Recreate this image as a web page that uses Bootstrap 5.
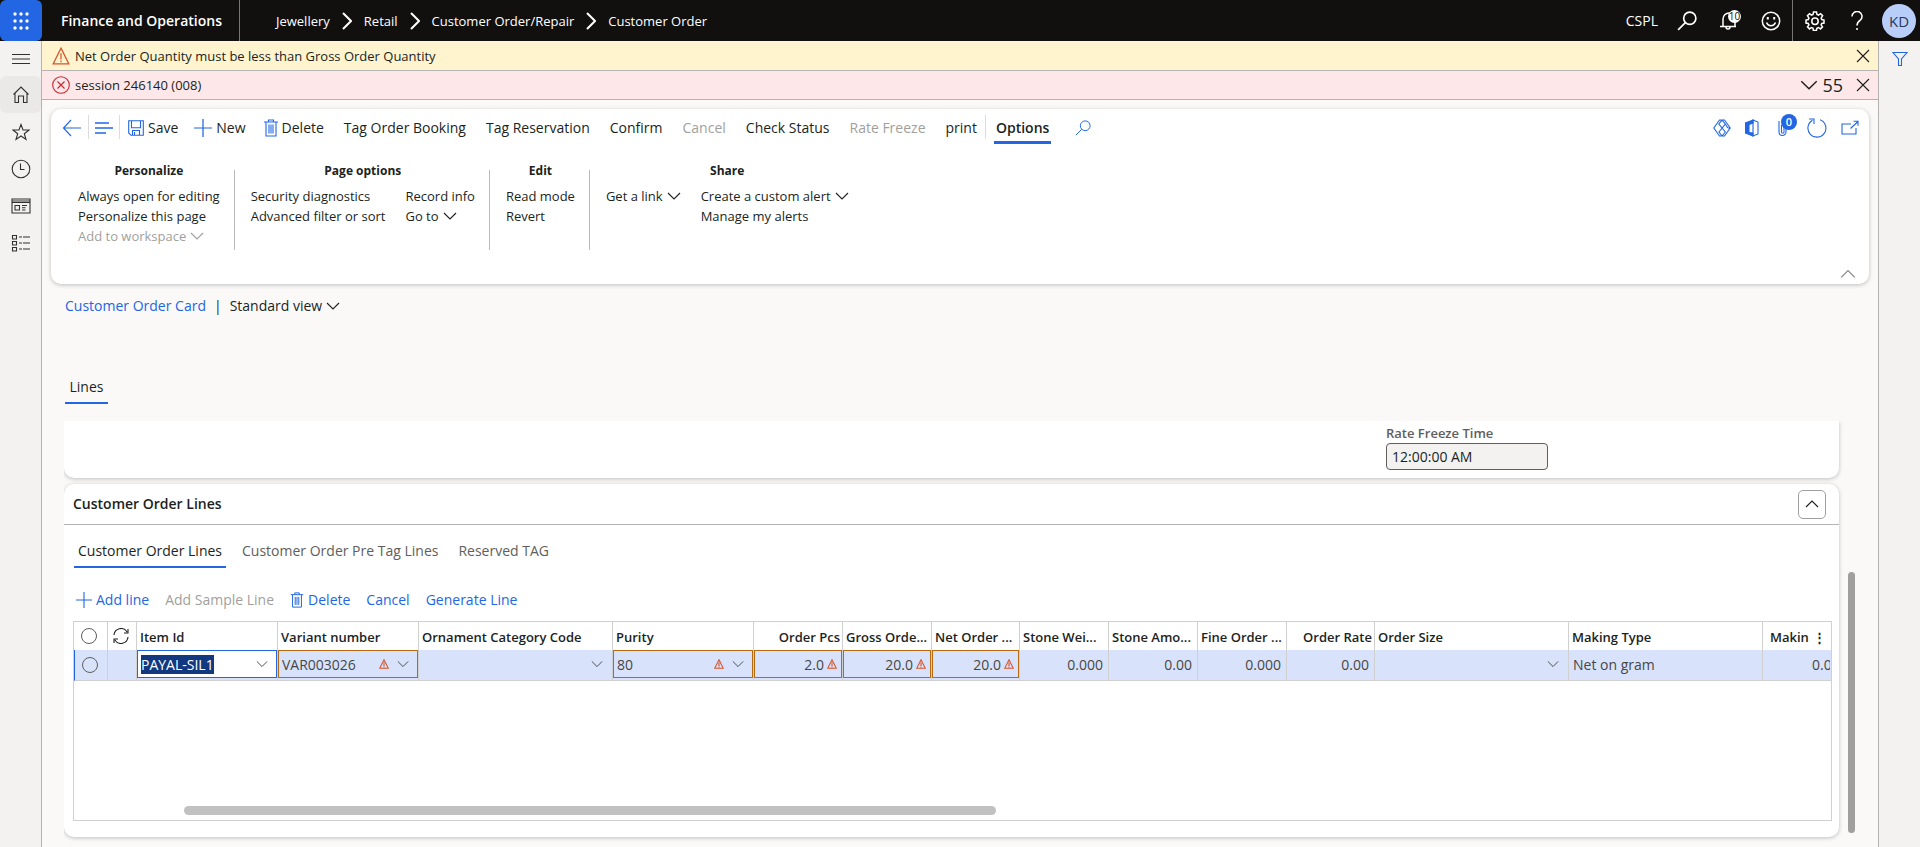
<!DOCTYPE html>
<html lang="en">
<head>
<meta charset="utf-8">
<meta name="viewport" content="width=device-width, initial-scale=1">
<title>Customer Order - Finance and Operations</title>
<link href="https://cdn.jsdelivr.net/npm/bootstrap@5.3.0/dist/css/bootstrap.min.css" rel="stylesheet">
<style>
:root{--blue:#2266e3;--ink:#201f1e;--line:#b5b3b1;--grid:#d0d0d0;--panel:#f3f2f1}
body{font-family:"Open Sans","Noto Sans",sans-serif;font-size:14px;line-height:20px;color:var(--ink);background:#faf9f8}
a{color:inherit;text-decoration:none}
button{font:inherit;color:inherit;background:none;border:0;padding:0;white-space:nowrap}
button:disabled{color:#a19f9d}
svg{display:block;flex:none;fill:none;stroke:currentColor;stroke-width:1.1}
.i10{width:10px;height:10px}.i12{width:12px;height:12px}.i14{width:14px;height:14px}.i16{width:16px;height:16px}.i18{width:18px;height:18px}.i20{width:20px;height:20px}
.blue{color:var(--blue)}
.gray{color:#605e5c}
.red{color:#d8532c}
.gap-cmd{gap:20px}
.topbar{height:41px;background:#11100f;color:#fff}
.waffle{width:42px;height:41px;background:var(--blue);border-radius:6px}
.waffle svg{fill:#fff;stroke:none}
.brand{font-weight:600;padding:0 17px 0 19px;border-right:1px solid #797775;height:41px;line-height:41px}
.crumbs{padding-left:36px;gap:12px;font-size:13px}
.topicon{width:42px;height:41px}
.topicon svg{stroke-width:1.5}
.gearbox{border-left:1px solid #797775;width:44px}
.avatar{width:34px;height:34px;border-radius:50%;background:#b9cdf9;color:#2b3a5c;font-size:15px}
.bellcount{left:20px;top:10px;width:13px;height:13px;border-radius:50%;background:#fff;color:#11100f;font-size:10px;line-height:13px;text-align:center}
.side{width:42px;background:var(--panel);border-right:1px solid var(--line)}
.side button{height:37px;width:100%;display:flex;align-items:center;justify-content:center;color:#323130}
.side .menu{height:35px}
.side .here{background:#eae9e8;border-radius:6px}
.right{width:42px;background:var(--panel);border-left:1px solid var(--line);padding-top:10px}
.msg{height:29px;padding:0 8px 0 10px;font-size:13px;border-bottom:1px solid var(--line);gap:5px}
.msg.warn{background:#fff4ce;height:30px}
.msg.err{background:#fde7e9}
.count{font-size:18px}
.sheet{background:#fff;border-radius:10px;box-shadow:0 1px 4px rgba(0,0,0,.24)}
.ribbon{margin:9px 9px 0;height:175px}
.tools{padding:6px 10px 0 11px;height:52px}
.tools button{height:26px;display:flex;align-items:center}
.tools .backbtn{padding-right:6px}
.tools .listbtn{padding:0 6px}
.tools .delbtn{margin-left:18px}
.vsep{width:1px;height:24px;background:#dcdcdc}
.tools .current{height:29px;border-bottom:3px solid var(--blue);padding:0 2px;font-weight:600}
.sysicons{gap:14px}
.clip{left:4px;top:-1px;width:16px;height:16px;border-radius:50%;background:var(--blue);color:#fff;font-size:11px;font-weight:600;line-height:16px;text-align:center}
.groups{padding-left:11px;font-size:13px}
.grp{padding:0 14px 0 16px}
.grp h2{font-size:12px;line-height:20px;font-weight:700;text-align:center;margin:0 0 5px}
.grp button{height:20px;display:flex;align-items:center;gap:4px}
.gline{width:1px;height:80px;background:#bdbbb9;margin-top:9px}
.collapse-row{padding:16px 13px 0 0;color:#8a8886}
.viewbar{padding:12px 0 0 23px}
.linestab{margin:61px 0 0 23px;width:43px;height:27px;padding-bottom:6px;border-bottom:2px solid var(--blue)}
.scroller{margin:17px 0 0 22px;overflow:hidden}
.cards{margin:-10px 0 0 -4px;padding:10px 4px;clip-path:inset(10px 0 0 0)}
.upper{height:57px;border-radius:0 0 10px 10px;padding-left:1322px}
.upper label{font-size:13px;line-height:18px;font-weight:600;color:#605e5c;padding-top:3px;display:block}
.timebox{width:162px;height:27px;border:1px solid #605e5c;border-radius:4px;background:var(--panel);padding:0 5px;color:var(--ink);display:block;margin-top:1px}
.lower{margin-top:6px;min-height:353px}
.lower .head{height:41px;border-bottom:1px solid var(--line);padding:0 13px 0 9px;font-weight:600}
.fold{width:28px;height:29px;border:1px solid #a19f9d;border-radius:5px}
.tabs{margin:14px 0 0 10px;gap:12px;height:29px}
.tabs button{padding:0 4px 5px;color:#605e5c}
.tabs .on{color:var(--ink);border-bottom:2px solid var(--blue);padding-bottom:3px}
.acts{margin:22px 0 0 12px;gap:16px}
.grid{margin:11px 7px 16px 9px;border:1px solid var(--grid);overflow:hidden}
.lines{table-layout:fixed;width:100%;min-width:1757px;border-collapse:separate;border-spacing:0}
.lines th{height:28px;padding:2px 2px 0 3px;font-size:13px;font-weight:600;border-right:1px solid var(--grid);white-space:nowrap}
.lines td{height:31px;padding:0;border-right:1px solid var(--grid);border-bottom:1px solid var(--grid);background:#d8e3fb;color:#484644}
.lines .mark-col{padding:0 3px 0 0}
.lines th:last-child,.lines td:last-child{border-right:0}
.lines td:first-child{border-left:1px solid var(--blue)}
.field{height:28px;margin-bottom:2px;border:1px solid transparent;padding-right:8px;gap:4px}
.field input{min-width:0;width:100%;border:0;background:none;outline:0;padding:0 0 0 3px;color:inherit;height:22px}
.field.orange{border-color:#b9690f}
.field.edit{border-color:var(--blue);background:#fff}
.num input{text-align:right}
.num{padding-right:4px;gap:3px}
.field input::selection{background:#12397f;color:#fff}
.pick{appearance:none;width:16px;height:16px;border:1px solid #605e5c;border-radius:50%;display:block;margin:0 auto}
.hbar{width:812px;height:9px;border-radius:5px;background:#c1c1c1;margin:auto 0 5px 110px}
.vtrack{width:35px;padding:151px 23px 14px 5px}
.vthumb{background:#a09f9d;border-radius:4px;width:7px}
</style>
</head>
<body class="d-flex flex-column min-vh-100">
<svg width="0" height="0" class="position-absolute" aria-hidden="true">
<symbol id="down" viewBox="0 0 14 14"><path d="M1 4l6 6 6-6"/></symbol>
<symbol id="up" viewBox="0 0 14 14"><path d="M1 10l6-6 6 6"/></symbol>
<symbol id="next" viewBox="0 0 10 18"><path d="M1 1l8 8-8 8" stroke-width="2"/></symbol>
<symbol id="find" viewBox="0 0 18 18"><circle cx="11.5" cy="6.5" r="5.5"/><path d="M7.5 10.5L1 17"/></symbol>
<symbol id="close" viewBox="0 0 14 14"><path d="M1 1l12 12M13 1L1 13"/></symbol>
<symbol id="alert" viewBox="0 0 16 16"><path d="M8 1L15 15H1zM8 5.5v5.500M8 12v1.500"/></symbol>
<symbol id="alert-sm" viewBox="0 0 10 10"><path d="M5 .8L9.300 9.300H.7zM5 3.500v3.500M5 7.600v1"/></symbol>
<symbol id="plus" viewBox="0 0 16 16"><path d="M8 0v16M0 8h16"/></symbol>
<symbol id="bin" viewBox="0 0 14 18"><path d="M0 3h14M4.500 3V1h5v2M2 3v14h10V3M5 5.500v9M7 5.500v9M9 5.500v9"/></symbol>
<symbol id="sync" viewBox="0 0 16 16"><path d="M1 7a7 7 0 0 1 13-3M15 1v4h-4M15 9a7 7 0 0 1-13 3M1 15v-4h4"/></symbol>
</svg>

<header class="topbar d-flex align-items-center">
<button class="waffle d-flex align-items-center justify-content-center" aria-label="Apps"><svg width="16" height="18" viewBox="0 0 16 18"><circle cx="2" cy="2" r="1.700"/><circle cx="8" cy="2" r="1.700"/><circle cx="14" cy="2" r="1.700"/><circle cx="2" cy="9" r="1.700"/><circle cx="8" cy="9" r="1.700"/><circle cx="14" cy="9" r="1.700"/><circle cx="2" cy="16" r="1.700"/><circle cx="8" cy="16" r="1.700"/><circle cx="14" cy="16" r="1.700"/></svg></button>
<a class="brand" href="#">Finance and Operations</a>
<nav class="crumbs d-flex align-items-center" aria-label="Breadcrumb"><a href="#">Jewellery</a><svg width="10" height="18"><use href="#next"/></svg><a href="#">Retail</a><svg width="10" height="18"><use href="#next"/></svg><a href="#">Customer Order/Repair</a><svg width="10" height="18"><use href="#next"/></svg><a href="#">Customer Order</a></nav>
<div class="ms-auto d-flex align-items-center">
<button>CSPL</button>
<button class="topicon d-flex align-items-center justify-content-center ms-2" aria-label="Search"><svg class="i20"><use href="#find"/></svg></button>
<button class="topicon d-flex align-items-center justify-content-center position-relative" aria-label="Notifications"><svg width="18" height="18" viewBox="0 0 18 18"><path d="M3 14V7a6 6 0 0 1 12 0v7M0 14.500h16M6 15a2 2 0 0 0 4 0"/></svg><span class="bellcount position-absolute">10</span></button>
<button class="topicon d-flex align-items-center justify-content-center" aria-label="Feedback"><svg class="i20" viewBox="0 0 20 20"><circle cx="10" cy="10" r="8.700"/><path d="M5.500 11.500a4.800 4.800 0 0 0 9 0"/><path d="M6.800 6v2.500M13.200 6v2.500" stroke-width="2"/></svg></button>
<button class="topicon gearbox d-flex align-items-center justify-content-center" aria-label="Settings"><svg class="i20" viewBox="0 0 20 20"><path d="M8.500 1h3l.5 2.500 1.500.6L15.600 2.700l2 2L16.200 7l.6 1.500L19 9v3l-2.300.4-.6 1.500 1.400 2-2 2-2-1.400-1.600.7-.5 2.300h-3L8 17.200l-1.500-.7-2 1.400-2-2 1.400-2L3.300 12.400 1 12V9l2.300-.5L3.900 7 2.500 4.700l2-2L6.500 4.100 8 3.500z"/><circle cx="10" cy="10.300" r="3.200"/></svg></button>
<button class="topicon d-flex align-items-center justify-content-center" aria-label="Help"><svg width="12" height="20" viewBox="0 0 12 20"><path d="M1 5.500a5 5 0 1 1 8.500 3.500C7.500 10.500 6 11.500 6 14.500M6 17v2"/></svg></button>
<button class="avatar me-1 ms-1" aria-label="Account">KD</button>
</div>
</header>

<div class="d-flex flex-grow-1">
<nav class="side flex-shrink-0" aria-label="Navigation">
<button class="menu" aria-label="Expand"><svg width="18" height="12" viewBox="0 0 18 12"><path d="M0 1.500h18M0 6h18M0 10.500h18"/></svg></button>
<button class="here" aria-label="Home"><svg class="i18" viewBox="0 0 18 18"><path d="M1.500 8.500L9 1l7.500 7.500M3 7.500V16.500h3.500V10h5v6.500H15V7.500"/></svg></button>
<button aria-label="Favorites"><svg class="i18" viewBox="0 0 18 18"><path d="M9 1.500l2 5.500h6l-4.700 3.700 1.700 5.800L9 13l-5 3.500 1.700-5.800L1 7h6z"/></svg></button>
<button aria-label="Recent"><svg class="i20" viewBox="0 0 20 20"><circle cx="10" cy="10" r="8.800"/><path d="M9.500 4.500v6h4"/></svg></button>
<button aria-label="Workspaces"><svg class="i20" viewBox="0 0 20 16"><path d="M1 1h18v14H1zM1 4.500h18M1 3h18M4 7.500h4.500v4.500H4zM11 7.500h5M11 9.700h3.500M11 12h3.500"/></svg></button>
<button aria-label="Modules"><svg class="i20" viewBox="0 0 20 18"><path d="M1.500 1.500h4v3.500h-4zM1.500 7.500h4v3.500h-4zM1.500 13.500h4V17h-4zM8 3h3M12 3h7M8 9h3M12 9h7M8 15h3M12 15h7"/></svg></button>
</nav>

<main class="flex-grow-1 d-flex flex-column overflow-hidden">
<div class="msg warn d-flex align-items-center"><svg class="i18 red"><use href="#alert"/></svg><span>Net Order Quantity must be less than Gross Order Quantity</span><button class="ms-auto" aria-label="Dismiss"><svg class="i14"><use href="#close"/></svg></button></div>
<div class="msg err d-flex align-items-center"><svg class="i18" viewBox="0 0 18 18" color="#c4262e"><circle cx="9" cy="9" r="8.300"/><path d="M5.500 5.500l7 7M12.500 5.500l-7 7"/></svg><span>session 246140 (008)</span><button class="ms-auto d-flex align-items-center gap-1 count"><svg class="i18"><use href="#down"/></svg>55</button><button class="ms-2" aria-label="Dismiss"><svg class="i14"><use href="#close"/></svg></button></div>

<section class="sheet ribbon">
<div class="tools d-flex align-items-start">
<button class="blue backbtn" aria-label="Back"><svg width="20" height="18" viewBox="0 0 20 18"><path d="M9 1L1.500 9 9 17M1.500 9H19"/></svg></button><span class="vsep"></span>
<button class="blue listbtn" aria-label="List"><svg width="18" height="14" viewBox="0 0 18 14"><path d="M0 2h14M0 7h18M0 12h11" stroke-width="1.5"/></svg></button><span class="vsep"></span>
<button class="ms-2 gap-1"><svg class="i16 blue" viewBox="0 0 16 16"><path d="M.7.7h14.600v14.600H3L.7 13zM3.500.7v7h9v-7M4.500 15v-4.500h7V15M6.500 12v3"/></svg>Save</button>
<button class="ms-3 gap-1"><svg class="i18 blue"><use href="#plus"/></svg>New</button>
<button class="delbtn gap-1"><svg width="14" height="18" class="blue"><use href="#bin"/></svg>Delete</button>
<div class="d-flex gap-cmd ms-3 ps-1"><button>Tag Order Booking</button><button>Tag Reservation</button><button>Confirm</button><button disabled>Cancel</button><button>Check Status</button><button disabled>Rate Freeze</button><button>print</button></div>
<span class="vsep mx-2"></span>
<button class="current">Options</button>
<button class="blue ms-4" aria-label="Find action"><svg class="i16"><use href="#find"/></svg></button>
<div class="sysicons ms-auto d-flex blue">
<button aria-label="Power Apps"><svg class="i18" viewBox="0 0 18 18"><path d="M6.500 1L.8 9l5.700 8h5L17.200 9l-5.700-8zM9 1.200L5.800 5 12.300 13 9 17M9 1.200L12.300 5 6 13l3 4M12.300 5l2.500 4M17 9h-2"/></svg></button>
<button aria-label="Office"><svg width="14" height="18" viewBox="0 0 14 18"><path d="M0 4l8-3v3L4 5.500v8L8 14v3l-8-3z" fill="currentColor"/><path d="M8 1l5 2v12l-5 2z"/></svg></button>
<button class="position-relative mx-1" aria-label="Attachments"><svg width="12" height="18" viewBox="0 0 12 18"><path d="M2 2v11a3.500 3.500 0 0 0 7 0V4M4.500 6v7a1 1 0 0 0 2.500 0V5"/></svg><span class="clip position-absolute">0</span></button>
<button aria-label="Refresh"><svg class="i20" viewBox="0 0 20 20"><path d="M13 1.700a9 9 0 1 1-7.500.6M2 1h5v5"/></svg></button>
<button aria-label="Open in new window"><svg width="18" height="16" viewBox="0 0 18 16"><path d="M10 4H1v10h14V8M9.500 8.500L17 1.500M12.500 1.200H17v4.500"/></svg></button>
</div>
</div>
<div class="groups d-flex">
<div class="grp"><h2>Personalize</h2><button>Always open for editing</button><button>Personalize this page</button><button disabled>Add to workspace <svg class="i14"><use href="#down"/></svg></button></div><span class="gline"></span>
<div class="grp"><h2>Page options</h2><div class="d-flex gap-cmd"><div><button>Security diagnostics</button><button>Advanced filter or sort</button></div><div><button>Record info</button><button>Go to <svg class="i14"><use href="#down"/></svg></button></div></div></div><span class="gline"></span>
<div class="grp"><h2>Edit</h2><button>Read mode</button><button>Revert</button></div><span class="gline"></span>
<div class="grp"><h2>Share</h2><div class="d-flex gap-cmd"><div><button>Get a link <svg class="i14"><use href="#down"/></svg></button></div><div><button>Create a custom alert <svg class="i14"><use href="#down"/></svg></button><button>Manage my alerts</button></div></div></div>
</div>
<div class="collapse-row d-flex justify-content-end"><button aria-label="Collapse"><svg class="i16"><use href="#up"/></svg></button></div>
</section>

<div class="viewbar d-flex align-items-center"><a href="#" class="blue">Customer Order Card</a><span class="mx-2">|</span><button class="d-flex align-items-center gap-1">Standard view <svg class="i14"><use href="#down"/></svg></button></div>
<button class="linestab">Lines</button>

<div class="scroller d-flex flex-grow-1">
<div class="flex-grow-1 d-flex flex-column cards overflow-hidden">
<section class="sheet upper"><label for="rft">Rate Freeze Time</label><input id="rft" class="timebox" value="12:00:00 AM" readonly></section>
<section class="sheet lower flex-grow-1 d-flex flex-column">
<div class="head d-flex align-items-center justify-content-between"><span>Customer Order Lines</span><button class="fold d-flex align-items-center justify-content-center" aria-label="Collapse section"><svg class="i14"><use href="#up"/></svg></button></div>
<div class="tabs d-flex"><button class="on">Customer Order Lines</button><button>Customer Order Pre Tag Lines</button><button>Reserved TAG</button></div>
<div class="acts d-flex blue"><button class="d-flex align-items-center gap-1"><svg class="i16"><use href="#plus"/></svg>Add line</button><button disabled>Add Sample Line</button><button class="d-flex align-items-center gap-1"><svg width="14" height="16"><use href="#bin"/></svg>Delete</button><button>Cancel</button><button>Generate Line</button></div>
<div class="grid d-flex flex-column flex-grow-1">
<table class="lines">
<colgroup><col style="width:34px"><col style="width:29px"><col style="width:141px"><col style="width:141px"><col style="width:194px"><col style="width:141px"><col style="width:89px"><col style="width:89px"><col style="width:88px"><col style="width:89px"><col style="width:89px"><col style="width:89px"><col style="width:88px"><col style="width:194px"><col style="width:194px"><col></colgroup>
<thead><tr><th class="mark-col"><input type="radio" class="pick" aria-label="Select all"></th><th class="mark-col"><svg class="i16 mx-auto"><use href="#sync"/></svg></th><th>Item Id</th><th>Variant number</th><th>Ornament Category Code</th><th>Purity</th><th class="text-end">Order Pcs</th><th>Gross Orde...</th><th>Net Order ...</th><th>Stone Wei...</th><th>Stone Amo...</th><th>Fine Order ...</th><th class="text-end">Order Rate</th><th>Order Size</th><th>Making Type</th><th><div class="d-flex ps-1"><span>Makin</span><button class="ms-1" aria-label="Column options">⋮</button></div></th></tr></thead>
<tbody><tr>
<td class="mark-col"><input type="radio" class="pick" aria-label="Select row"></td><td></td>
<td><div class="field edit d-flex align-items-center"><input id="item" value="PAYAL-SIL1" aria-label="Item Id"><button aria-label="Open"><svg class="i12"><use href="#down"/></svg></button></div></td>
<td><div class="field orange d-flex align-items-center"><input value="VAR003026" aria-label="Variant number"><svg class="i10 red"><use href="#alert-sm"/></svg><button class="ms-1" aria-label="Open"><svg class="i12"><use href="#down"/></svg></button></div></td>
<td><div class="field d-flex align-items-center"><input aria-label="Ornament Category Code"><button aria-label="Open"><svg class="i12"><use href="#down"/></svg></button></div></td>
<td><div class="field orange d-flex align-items-center"><input value="80" aria-label="Purity"><svg class="i10 red"><use href="#alert-sm"/></svg><button class="ms-1" aria-label="Open"><svg class="i12"><use href="#down"/></svg></button></div></td>
<td><div class="field orange num d-flex align-items-center"><input value="2.0" aria-label="Order Pcs"><svg class="i10 red"><use href="#alert-sm"/></svg></div></td>
<td><div class="field orange num d-flex align-items-center"><input value="20.0" aria-label="Gross Order"><svg class="i10 red"><use href="#alert-sm"/></svg></div></td>
<td><div class="field orange num d-flex align-items-center"><input value="20.0" aria-label="Net Order"><svg class="i10 red"><use href="#alert-sm"/></svg></div></td>
<td><div class="field num d-flex align-items-center"><input value="0.000" aria-label="Stone Weight"></div></td>
<td><div class="field num d-flex align-items-center"><input value="0.00" aria-label="Stone Amount"></div></td>
<td><div class="field num d-flex align-items-center"><input value="0.000" aria-label="Fine Order"></div></td>
<td><div class="field num d-flex align-items-center"><input value="0.00" aria-label="Order Rate"></div></td>
<td><div class="field d-flex align-items-center"><input aria-label="Order Size"><button aria-label="Open"><svg class="i12"><use href="#down"/></svg></button></div></td>
<td><div class="field d-flex align-items-center"><input value="Net on gram" aria-label="Making Type"></div></td>
<td><div class="field d-flex align-items-center ps-5 pe-0"><input class="p-0" value="0.00" aria-label="Making"></div></td>
</tr></tbody>
</table>
<div class="hbar"></div>
</div>
</section>
</div>
<div class="vtrack d-flex flex-shrink-0"><div class="vthumb"></div></div>
</div>
</main>
<aside class="right flex-shrink-0 d-flex flex-column align-items-center"><button aria-label="Filters" class="blue"><svg class="i16" viewBox="0 0 16 16"><path d="M1 1.500h14L9.500 8v6.500h-3V8z"/></svg></button></aside>
</div>
<script src="https://cdn.jsdelivr.net/npm/bootstrap@5.3.0/dist/js/bootstrap.bundle.min.js"></script>
<script>
const item = document.getElementById('item');
item.focus({preventScroll: true});
item.select();
</script>
</body>
</html>
